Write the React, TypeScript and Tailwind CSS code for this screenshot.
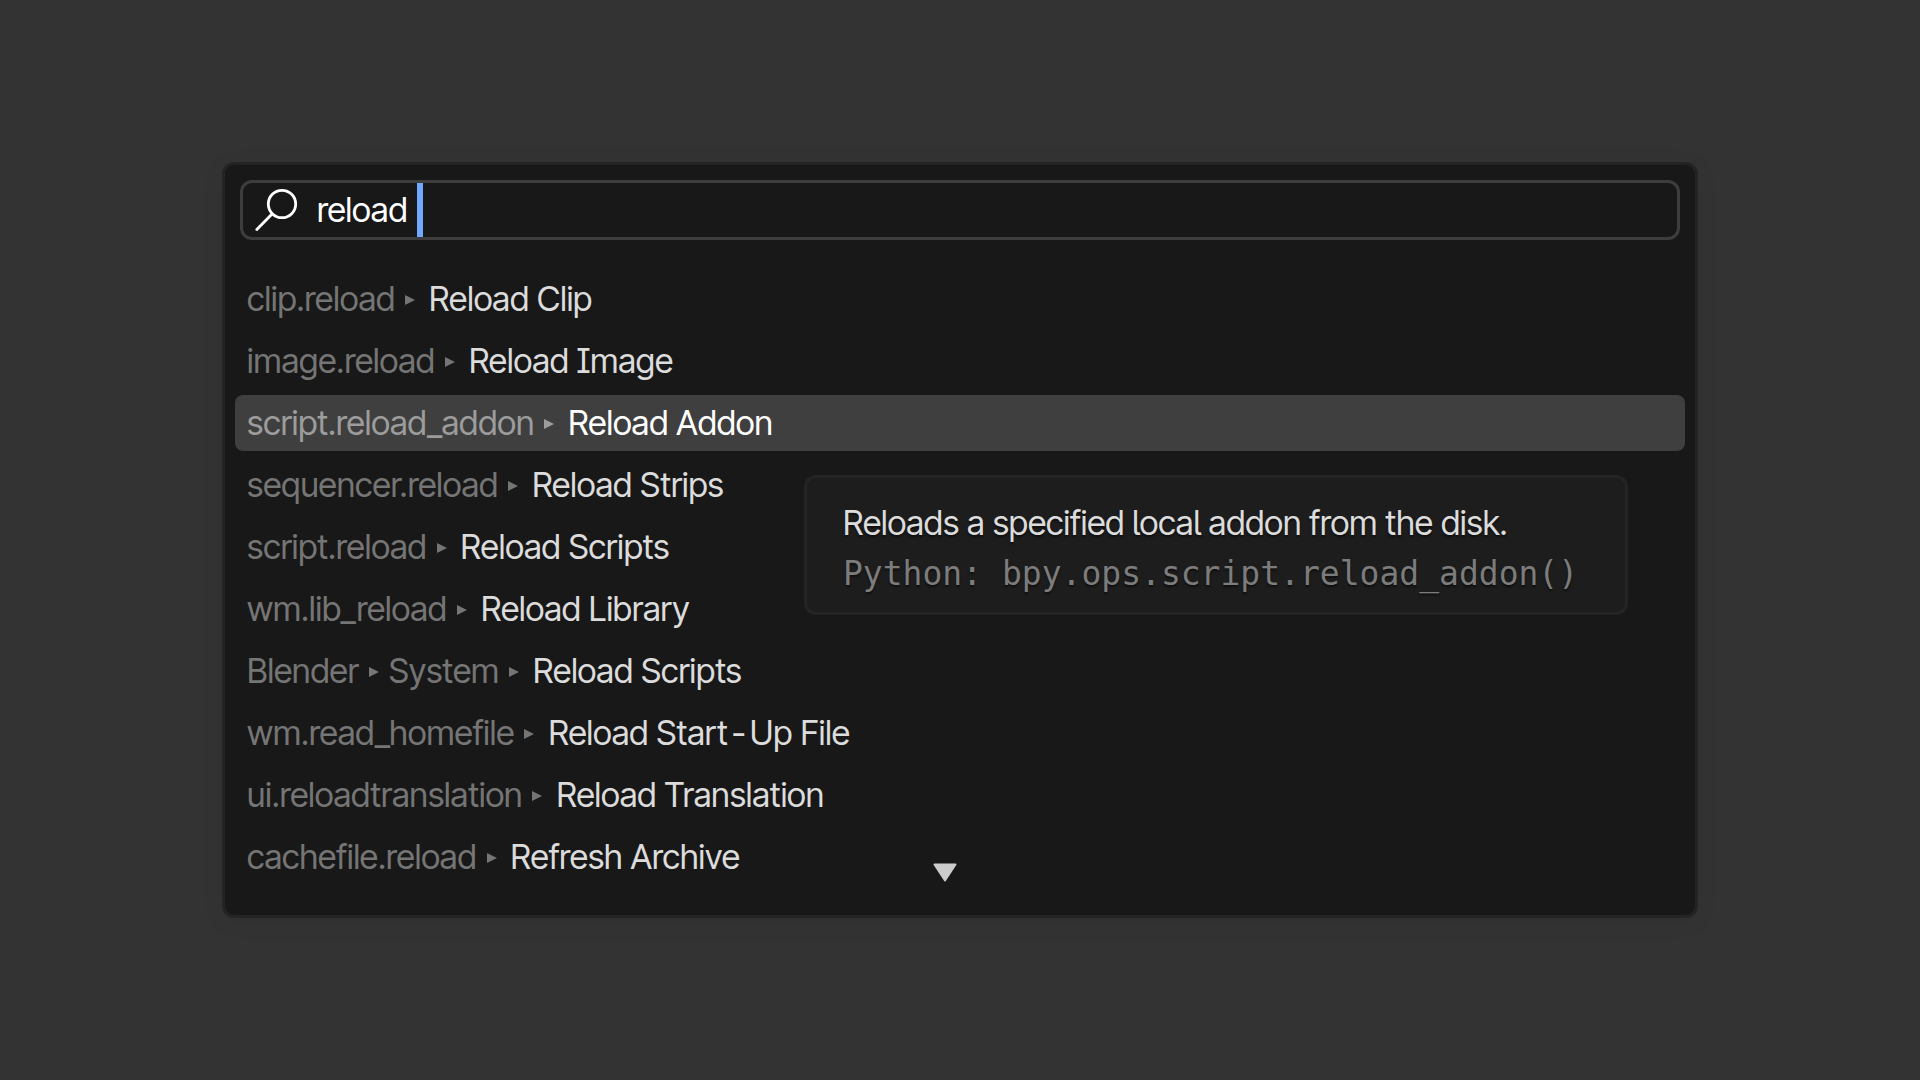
import React from "react";

type Entry = { path: string[]; label: React.ReactNode; id: string; active?: boolean };

const entries: Entry[] = [
  { id: "clip", path: ["clip.reload"], label: "Reload Clip" },
  {
    id: "image",
    path: ["image.reload"],
    label: (
      <>
        Reload <SerifI />mage
      </>
    ),
  },
  { id: "addon", path: ["script.reload_addon"], label: "Reload Addon", active: true },
  { id: "strips", path: ["sequencer.reload"], label: "Reload Strips" },
  { id: "scripts", path: ["script.reload"], label: "Reload Scripts" },
  { id: "library", path: ["wm.lib_reload"], label: "Reload Library" },
  { id: "system", path: ["Blender", "System"], label: "Reload Scripts" },
  {
    id: "startup",
    path: ["wm.read_homefile"],
    label: (
      <>
        Reload Start<span className="mx-1">-</span>Up File
      </>
    ),
  },
  { id: "translation", path: ["ui.reloadtranslation"], label: "Reload Translation" },
  { id: "archive", path: ["cachefile.reload"], label: "Refresh Archive" },
];

function SerifI() {
  return <span className="[font-feature-settings:'cv08']">I</span>;
}

function TailL() {
  return <span className="[font-feature-settings:'cv05']">l</span>;
}

function Separator() {
  return (
    <svg viewBox="0 0 10 10" className="mt-1 mx-2.5 h-2.5 w-2.5 shrink-0 fill-current" aria-hidden="true">
      <path d="M0 0 L10 5 L0 10 Z" />
    </svg>
  );
}

function SearchIcon() {
  return (
    <svg viewBox="0 0 44 44" className="h-11 w-11 shrink-0" fill="none" stroke="#fff" strokeWidth="2.8" strokeLinecap="round" aria-hidden="true">
      <circle cx="27" cy="16" r="13.7" />
      <path d="M17 26 L1.8 41.5" />
    </svg>
  );
}

function Tooltip() {
  return (
    <div
      role="tooltip"
      className="absolute left-[569px] top-20 z-10 whitespace-nowrap rounded-xl border-3 border-[#242424] bg-[#1d1d1d] pt-5 pr-[47px] pb-3 pl-9 text-left"
    >
      <p className="leading-[50px] text-[#dcdcdc]">
        Reloads a specified <TailL />oca<TailL /> addon from the disk.
      </p>
      <p className="font-['DejaVu_Sans_Mono',monospace] text-[33px] leading-[52px] text-[#7c7c7c]">
        Python: bpy.ops.script.reload_addon()
      </p>
    </div>
  );
}

function ResultRow({ entry }: { entry: Entry }) {
  return (
    <li className="relative">
      <button
        type="button"
        className={
          entry.active
            ? "flex h-14 w-full items-center rounded-lg bg-[#3f3f3f] px-3 pb-0.5 text-white"
            : "flex h-14 w-full items-center rounded-lg px-3 pb-0.5 text-[#dcdcdc]"
        }
      >
        <span className={entry.active ? "flex items-center text-[#9c9c9c]" : "flex items-center text-[#757575]"}>
          {entry.path.map((part) => (
            <React.Fragment key={part}>
              <span>{part}</span>
              <Separator />
            </React.Fragment>
          ))}
        </span>
        <span className="ml-1 whitespace-nowrap">{entry.label}</span>
      </button>
      {entry.active && <Tooltip />}
    </li>
  );
}

export default function App() {
  return (
    <main className="flex min-h-screen items-center justify-center bg-[#333333] px-8 font-['Inter_Tight','Inter',sans-serif] text-[34px] [text-shadow:0_2px_2px_rgb(0_0_0/0.5)]">
      <section
        aria-label="Operator search"
        className="w-full max-w-[1476px] rounded-xl border-3 border-[#242424] bg-[#181818] px-2.5 pt-[15px] pb-[30px] shadow-[0_4px_24px_rgb(0_0_0/0.06)]"
      >
        <label className="mx-[5px] flex h-[60px] items-center rounded-xl border-3 border-[#3d3d3d] bg-[#181818] pl-3">
          <SearchIcon />
          <input
            type="text"
            aria-label="Search operators"
            defaultValue="reload"
            className="ml-[18px] field-sizing-content bg-transparent pb-0.5 text-white outline-none"
          />
          <span className="ml-2.5 h-full w-1.5 bg-[#71a8ff]" />
        </label>
        <ul className="mt-[31px] flex flex-col gap-1.5">
          {entries.map((entry) => (
            <ResultRow key={entry.id} entry={entry} />
          ))}
        </ul>
        <svg
          viewBox="0 0 24 19"
          className="absolute -mt-[22px] ml-[698px] h-[19px] w-6"
          fill="#cccccc"
          stroke="#cccccc"
          strokeWidth="2"
          strokeLinejoin="round"
          aria-hidden="true"
        >
          <path d="M1.5 1.5 H22.5 L12 17.5 Z" />
        </svg>
      </section>
    </main>
  );
}
